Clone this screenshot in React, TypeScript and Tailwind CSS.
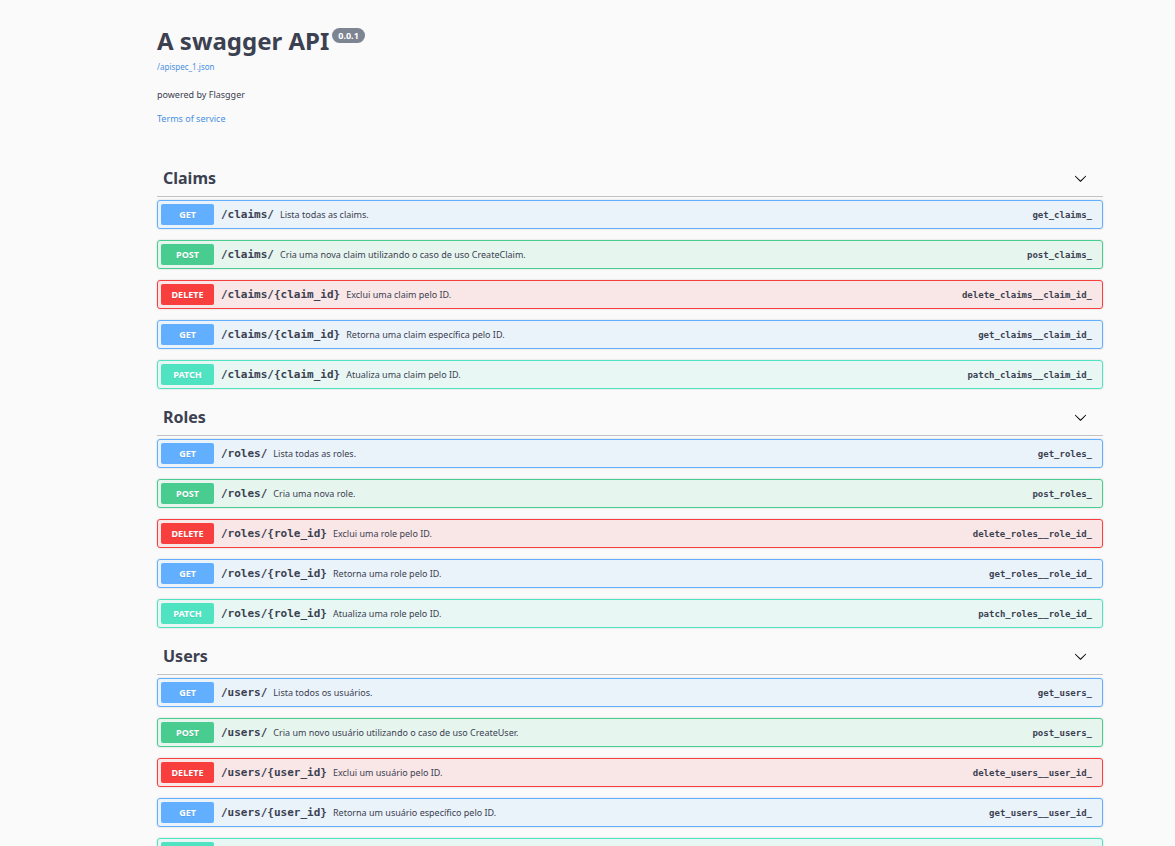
import { useState } from "react";

type Method = "GET" | "POST" | "DELETE" | "PATCH";

interface Operation {
  method: Method;
  path: string;
  summary: string;
  id: string;
}

interface Tag {
  name: string;
  operations: Operation[];
}

const tags: Tag[] = [
  {
    name: "Claims",
    operations: [
      { method: "GET", path: "/claims/", summary: "Lista todas as claims.", id: "get_claims_" },
      { method: "POST", path: "/claims/", summary: "Cria uma nova claim utilizando o caso de uso CreateClaim.", id: "post_claims_" },
      { method: "DELETE", path: "/claims/{claim_id}", summary: "Exclui uma claim pelo ID.", id: "delete_claims__claim_id_" },
      { method: "GET", path: "/claims/{claim_id}", summary: "Retorna uma claim específica pelo ID.", id: "get_claims__claim_id_" },
      { method: "PATCH", path: "/claims/{claim_id}", summary: "Atualiza uma claim pelo ID.", id: "patch_claims__claim_id_" },
    ],
  },
  {
    name: "Roles",
    operations: [
      { method: "GET", path: "/roles/", summary: "Lista todas as roles.", id: "get_roles_" },
      { method: "POST", path: "/roles/", summary: "Cria uma nova role.", id: "post_roles_" },
      { method: "DELETE", path: "/roles/{role_id}", summary: "Exclui uma role pelo ID.", id: "delete_roles__role_id_" },
      { method: "GET", path: "/roles/{role_id}", summary: "Retorna uma role pelo ID.", id: "get_roles__role_id_" },
      { method: "PATCH", path: "/roles/{role_id}", summary: "Atualiza uma role pelo ID.", id: "patch_roles__role_id_" },
    ],
  },
  {
    name: "Users",
    operations: [
      { method: "GET", path: "/users/", summary: "Lista todos os usuários.", id: "get_users_" },
      { method: "POST", path: "/users/", summary: "Cria um novo usuário utilizando o caso de uso CreateUser.", id: "post_users_" },
      { method: "DELETE", path: "/users/{user_id}", summary: "Exclui um usuário pelo ID.", id: "delete_users__user_id_" },
      { method: "GET", path: "/users/{user_id}", summary: "Retorna um usuário específico pelo ID.", id: "get_users__user_id_" },
      { method: "PATCH", path: "/users/{user_id}", summary: "Atualiza um usuário pelo ID.", id: "patch_users__user_id_" },
    ],
  },
];

const rowStyles: Record<Method, string> = {
  GET: "border-[#61affe] bg-[#61affe]/10",
  POST: "border-[#49cc90] bg-[#49cc90]/10",
  DELETE: "border-[#f93e3e] bg-[#f93e3e]/10",
  PATCH: "border-[#50e3c2] bg-[#50e3c2]/10",
};

const badgeStyles: Record<Method, string> = {
  GET: "bg-[#61affe]",
  POST: "bg-[#49cc90]",
  DELETE: "bg-[#f93e3e]",
  PATCH: "bg-[#50e3c2]",
};

function OperationRow({ method, path, summary, id }: Operation) {
  return (
    <button
      type="button"
      className={`flex h-[29px] w-full cursor-pointer items-center rounded-[3px] border pl-[3px] pr-[10px] text-left shadow-[0_0_2px_rgba(0,0,0,0.19)] ${rowStyles[method]}`}
    >
      <span
        className={`h-[21px] w-[53px] shrink-0 rounded-[2px] text-center text-[9px] leading-[21px] font-bold text-white [text-shadow:0_1px_0_rgba(0,0,0,0.1)] ${badgeStyles[method]}`}
      >
        {method}
      </span>
      <span className="ml-[7px] pt-[2px] font-['DejaVu_Sans_Mono',monospace] text-[11px] font-bold">{path}</span>
      <span className="ml-[6px] flex-1 text-[9px]">{summary}</span>
      <span className="pt-[2px] font-['DejaVu_Sans_Mono',monospace] text-[9px] font-bold">{id}</span>
    </button>
  );
}

function TagSection({ name, operations }: Tag) {
  const [open, setOpen] = useState(true);
  return (
    <section className="pb-[10px]">
      <h2 className="mb-[3px] border-b border-[#3b4151]/30">
        <button
          type="button"
          aria-expanded={open}
          onClick={() => setOpen(!open)}
          className="flex h-9 w-full cursor-pointer items-center justify-between pr-4 pl-[6px] text-[16px] font-bold"
        >
          {name}
          <svg viewBox="0 0 20 20" className={open ? "size-[13px]" : "size-[13px] -rotate-90"} fill="#000" aria-hidden="true">
            <path d="M17.418 6.109c.272-.268.709-.268.979 0s.271.701 0 .969l-7.908 7.83c-.27.268-.707.268-.979 0l-7.908-7.83c-.27-.268-.27-.701 0-.969.271-.268.709-.268.979 0L10 13.25z" />
          </svg>
        </button>
      </h2>
      {open && (
        <div className="flex flex-col gap-[11px]">
          {operations.map((operation) => (
            <OperationRow key={operation.id} {...operation} />
          ))}
        </div>
      )}
    </section>
  );
}

export default function App() {
  return (
    <main className="min-h-screen bg-[#fafafa] pr-[72px] pl-[157px] font-['Noto_Sans',sans-serif] text-[#3b4151]">
      <header className="flex flex-col items-start pt-6 pb-[33px]">
        <div className="flex items-start gap-[3px]">
          <h1 className="text-[24px] leading-[34px] font-bold">A swagger API</h1>
          <span className="mt-1 rounded-full bg-[#7d8492] px-[6px] text-[9px] leading-[15px] font-bold text-white">0.0.1</span>
        </div>
        <a href="/apispec_1.json" className="mt-[2px] text-[8px] leading-[14px] text-[#4990e2]">
          /apispec_1.json
        </a>
        <p className="mt-[13px] text-[9px] leading-4">powered by Flasgger</p>
        <a href="#terms" className="mt-2 text-[9px] leading-4 text-[#4990e2]">
          Terms of service
        </a>
      </header>
      {tags.map((tag) => (
        <TagSection key={tag.name} {...tag} />
      ))}
    </main>
  );
}
